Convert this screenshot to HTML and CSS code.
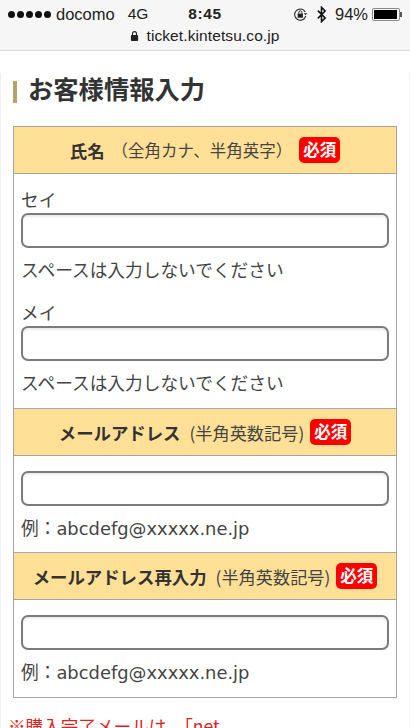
FILE: index.html
```html
<!DOCTYPE html>
<html lang="ja">
<head>
<meta charset="utf-8">
<title>お客様情報入力</title>
<link rel="stylesheet" href="styles.css">
</head>
<body>
<header class="browser">
  <div class="status">
    <div class="status-left">
      <span class="dots"><i></i><i></i><i></i><i></i><i></i></span>
      <span class="carrier">docomo</span>
      <span class="net">4G</span>
    </div>
    <div class="time">8:45</div>
    <div class="status-right">
      <svg class="rot" viewBox="0 0 16 16" width="15" height="15"><path d="M13 5.200A6 6 0 1 0 13.600 9.500" fill="none" stroke="#222" stroke-width="1.100"/><path d="M11.600 6.600h3.600l-1.800 2.200z" fill="#222"/><rect x="5" y="7" width="5.600" height="4.400" rx=".6" fill="#222"/><path d="M6.100 7V5.800a1.700 1.700 0 0 1 3.400 0V7" fill="none" stroke="#222" stroke-width="1"/></svg>
      <svg class="bt" viewBox="0 0 12 18" width="11" height="17"><path d="M2 4.800l8 8-4 4V1.200l4 4-8 8" fill="none" stroke="#111" stroke-width="1.700"/></svg>
      <span class="pct">94%</span>
      <span class="battery"><span class="fill"></span></span><span class="nub"></span>
    </div>
  </div>
  <div class="url">
    <svg viewBox="0 0 10 13" width="9" height="12"><rect x="1" y="5.500" width="8" height="6.500" rx="1" fill="#222"/><path d="M2.800 6V3.800a2.200 2.200 0 0 1 4.400 0V6" fill="none" stroke="#222" stroke-width="1.200"/></svg>
    <span>ticket.kintetsu.co.jp</span>
  </div>
</header>
<main class="page">
  <h1 class="title">お客様情報入力</h1>
  <section class="form">
    <div class="head head-name"><b>氏名</b><span class="note note-wide">（全角カナ、半角英字）</span><em class="req">必須</em></div>
    <div class="body body-name">
      <label class="label">セイ</label>
      <div class="input"></div>
      <p class="hint">スペースは入力しないでください</p>
      <label class="label label-next">メイ</label>
      <div class="input"></div>
      <p class="hint">スペースは入力しないでください</p>
    </div>
    <div class="head"><b>メールアドレス</b><span class="note">(半角英数記号)</span><em class="req">必須</em></div>
    <div class="body body-mail">
      <div class="input"></div>
      <p class="hint">例：<span class="latin">abcdefg@xxxxx.ne.jp</span></p>
    </div>
    <div class="head"><b>メールアドレス再入力</b><span class="note">(半角英数記号)</span><em class="req">必須</em></div>
    <div class="body body-mail">
      <div class="input"></div>
      <p class="hint">例：<span class="latin">abcdefg@xxxxx.ne.jp</span></p>
    </div>
  </section>
  <p class="warn">※購入完了メールは、「net</p>
</main>
</body>
</html>
```
FILE: styles.css
```css
* { box-sizing: border-box; }
html, body { margin: 0; height: 100%; overflow: hidden; background: #fff; }
body { font-family: "Liberation Sans", "Noto Sans CJK JP", sans-serif; color: #333; }
.browser { height: 51px; background: #f6f6f6; border-bottom: 1px solid #d8d8d8; color: #222; }
.status { height: 27px; padding: 1px 8px 0 8px; display: grid; grid-template-columns: 1fr auto 1fr; align-items: center; font-size: 16.500px; }
.status-left { display: flex; align-items: center; }
.dots { display: flex; gap: 2px; margin-right: 5px; }
.dots i { width: 7px; height: 7px; border-radius: 50%; background: #111; }
.net { margin-left: 13px; font-size: 15.500px; }
.time { font-weight: 700; font-size: 15.500px; letter-spacing: .6px; }
.status-right { display: flex; align-items: center; justify-content: flex-end; }
.rot { margin-right: 8px; }
.bt { margin-right: 8px; }
.pct { margin-right: 4px; }
.battery { width: 28px; height: 13px; border: 1px solid #888; border-radius: 2px; padding: 1px; display: block; }
.fill { display: block; height: 100%; width: 94%; background: #000; }
.nub { width: 2px; height: 5px; background: #555; }
.url { display: flex; justify-content: center; align-items: center; gap: 7px; height: 18px; font-size: 15.500px; letter-spacing: .1px; }
.page { padding: 0 12px; height: 677px; border-left: 1px solid #f1f1f1; border-right: 1px solid #f1f1f1; }
.title { margin: 22px 0 0; height: 30px; line-height: 30px; padding-left: 15px; font-size: 25.300px; font-weight: 700; color: #333; font-family: "Noto Sans CJK JP", sans-serif; position: relative; }
.title::before { content: ""; position: absolute; left: 0; top: 8px; width: 4px; height: 22px; background: #b2a46f; }
.form { margin-top: 23px; border: 1px solid #a5a5a0; }
.head { height: 47px; background: #ffe096; border-bottom: 1px solid #a8a494; display: flex; justify-content: center; align-items: center; font-family: "Noto Sans CJK JP", sans-serif; font-size: 17.400px; color: #333; }
.head b { font-weight: 700; }
.note { font-size: 17.200px; margin-left: 9px; color: #444; }
.note-wide { margin-left: 7px; font-size: 16.500px; }
.req { font-style: normal; font-weight: 700; color: #fff; background: #f00; border-radius: 5px; font-size: 16.500px; width: 41px; height: 26px; line-height: 25px; text-align: center; margin-left: 6px; }
.head-name .req { margin-left: 7px; }
.body { padding: 0 7px; background: #fff; border-bottom: 1px solid #a8a8a4; font-family: "Noto Sans CJK JP", sans-serif; font-size: 17.700px; color: #444; }
.body:last-child { border-bottom: 0; }
.body-name { height: 235px; padding-top: 13px; }
.body-mail { height: 97px; padding-top: 15px; }
.label { display: block; height: 26px; line-height: 24px; }
.label-next { margin-top: 18px; }
.input { height: 35px; border: 2px solid #7c7c7c; border-radius: 7px; background: #fff; box-shadow: inset 0 2px 2px #ececec; }
.hint { margin: 8px 0 0; height: 26px; line-height: 26px; white-space: nowrap; }
.latin { font-family: "DejaVu Sans", sans-serif; font-size: 17.900px; }
.warn { margin: 15px 0 0 -5px; color: #e02020; font-family: "Noto Sans CJK JP", sans-serif; font-size: 17.600px; line-height: 26px; white-space: nowrap; }
```
